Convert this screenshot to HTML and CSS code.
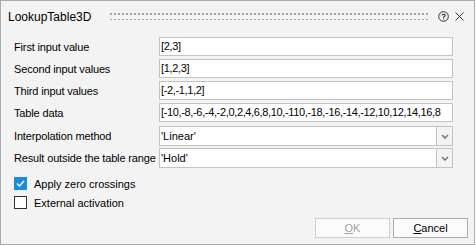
FILE: index.html
```html
<!DOCTYPE html>
<html lang="en">
<head>
  <meta charset="UTF-8">
  <title>LookupTable3D</title>
  <link rel="stylesheet" href="styles.css">
</head>
<body>

  <div class="dialog">
    <div class="titlebar">
      <span class="title">LookupTable3D</span>
      <span class="grip"></span>
      <svg class="help" width="11" height="11" viewBox="0 0 11 11">
        <circle cx="5.5" cy="5.5" r="4.8" fill="none" stroke="#333" stroke-width="1"/>
        <path d="M3.9 4.4 C3.9 2.8 7.1 2.8 7.1 4.4 C7.1 5.5 5.5 5.5 5.5 6.7" fill="none" stroke="#333" stroke-width="1.1"/>
        <rect x="5" y="7.5" width="1.1" height="1.1" fill="#333"/>
      </svg>
      <svg class="close" width="9" height="9" viewBox="0 0 9 9">
        <path d="M0.5 0.5 L8.5 8.5 M8.5 0.5 L0.5 8.5" stroke="#333" stroke-width="1"/>
      </svg>
    </div>

    <div class="form">
      <label>First input value</label>
      <div class="field">[2,3]</div>

      <label>Second input values</label>
      <div class="field">[1,2,3]</div>

      <label>Third input values</label>
      <div class="field">[-2,-1,1,2]</div>

      <label>Table data</label>
      <div class="field">[-10,-8,-6,-4,-2,0,2,4,6,8,10,-110,-18,-16,-14,-12,10,12,14,16,8</div>

      <label class="combo-label">Interpolation method</label>
      <div class="combo">
        <div class="field">'Linear'</div>
        <div class="arrow">
          <svg width="8" height="5" viewBox="0 0 8 5"><path d="M1 1 L4 4 L7 1" fill="none" stroke="#777" stroke-width="1.6"/></svg>
        </div>
      </div>

      <label class="combo-label">Result outside the table range</label>
      <div class="combo">
        <div class="field">'Hold'</div>
        <div class="arrow">
          <svg width="8" height="5" viewBox="0 0 8 5"><path d="M1 1 L4 4 L7 1" fill="none" stroke="#777" stroke-width="1.6"/></svg>
        </div>
      </div>
    </div>

    <div class="checks">
      <div class="check">
        <span class="box checked">
          <svg width="13" height="13" viewBox="0 0 13 13"><path d="M3 6.5 L5.5 9 L10 4" fill="none" stroke="white" stroke-width="1.4"/></svg>
        </span>
        Apply zero crossings
      </div>
      <div class="check">
        <span class="box"></span>
        External activation
      </div>
    </div>

    <div class="buttons">
      <button class="btn" disabled><u>O</u>K</button>
      <button class="btn"><u>C</u>ancel</button>
    </div>
  </div>

</body>
</html>
```

FILE: styles.css
```css
body {
  margin: 0;
  background: white;
  font-family: "Liberation Sans", Arial, sans-serif;
  font-size: 11px;
  color: black;
}

.dialog {
  width: 475px;
  height: 245px;
  box-sizing: border-box;
  border: 1px solid #ababab;
  background: #f3f3f3;
  display: flex;
  flex-direction: column;
}

.titlebar {
  height: 30px;
  display: flex;
  align-items: center;
  padding: 0 10px 0 7px;
}

.title {
  font-size: 12px;
  margin-top: 1px;
}

.grip {
  flex: 1;
  height: 8px;
  margin: 0 9px 0 18px;
  background-image: radial-gradient(circle, #a0a0a0 0.9px, transparent 1.1px);
  background-size: 4px 6px;
  background-position: 0 -1px;
}

.help {
  margin-right: 6px;
}

.form {
  display: grid;
  grid-template-columns: 145px 294px;
  grid-auto-rows: 19px;
  row-gap: 3px;
  padding: 6px 0 0 13px;
  align-items: center;
}

.form label {
  white-space: nowrap;
  letter-spacing: -0.15px;
}

.form .combo-label,
.form .combo {
  height: 20px;
}

.form .combo-label {
  display: flex;
  align-items: center;
  margin-top: 3px;
}

.form .combo {
  margin-top: 3px;
}

.field {
  height: 19px;
  box-sizing: border-box;
  border: 1px solid #c3c3c3;
  background: white;
  padding: 0 1px;
  line-height: 17px;
  white-space: nowrap;
  overflow: hidden;
  letter-spacing: -0.35px;
}

.combo {
  display: flex;
}

.combo .field {
  flex: 1;
  height: 20px;
  line-height: 18px;
  letter-spacing: 0;
}

.arrow {
  width: 16px;
  height: 20px;
  box-sizing: border-box;
  border: 1px solid #c3c3c3;
  border-left: none;
  background: #f3f3f3;
  display: flex;
  align-items: center;
  justify-content: center;
}

.checks {
  display: flex;
  flex-direction: column;
  gap: 6px;
  padding: 11px 0 0 13px;
}

.check {
  display: flex;
  align-items: center;
  gap: 7px;
  height: 13px;
}

.box {
  width: 13px;
  height: 13px;
  box-sizing: border-box;
  border: 1px solid #333;
  background: white;
  display: flex;
}

.box.checked {
  background: #1a8cdc;
  border-color: #1a8cdc;
}

.box.checked svg {
  margin: -1px;
}

.buttons {
  margin-top: auto;
  display: flex;
  justify-content: flex-end;
  gap: 3px;
  padding: 0 6px 6px 0;
}

.btn {
  width: 75px;
  height: 20px;
  box-sizing: border-box;
  border: 1px solid #adadad;
  background: #fbfbfb;
  font-family: "Liberation Sans", Arial, sans-serif;
  font-size: 11px;
  color: black;
  padding: 0;
}

.btn:disabled {
  border-color: #cccccc;
  color: #a0a0a0;
}
```
